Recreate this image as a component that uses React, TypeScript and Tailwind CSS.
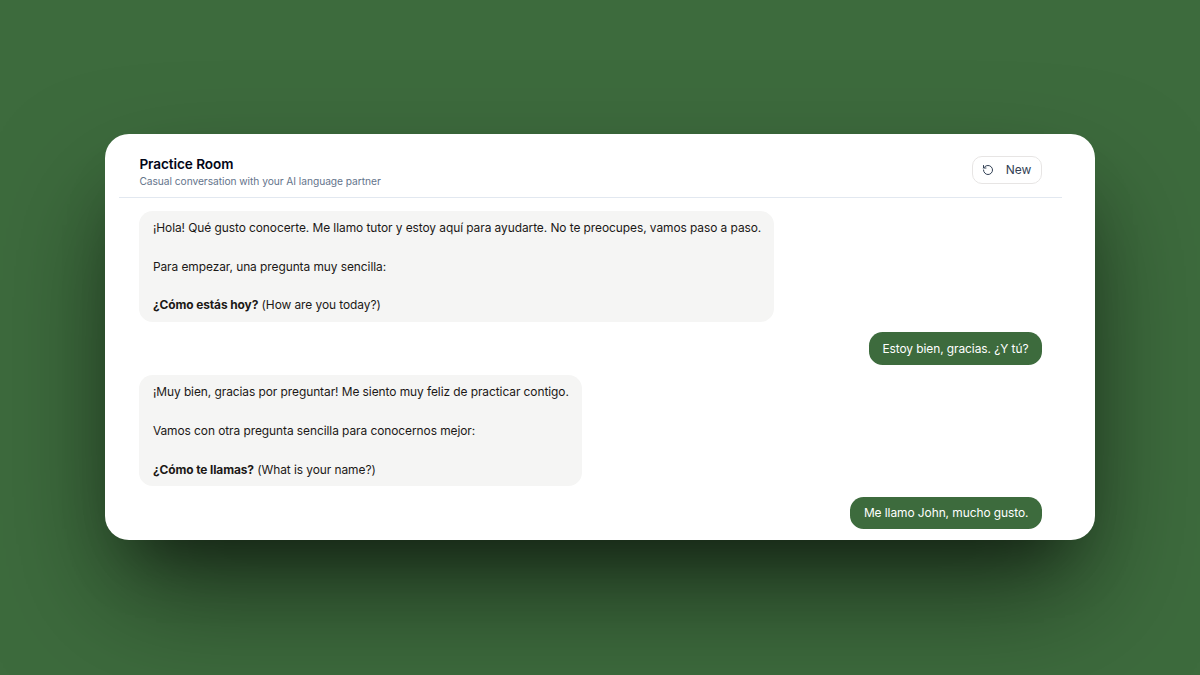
import { RotateCcw } from "lucide-react";

type Message = {
  id: number;
  from: "tutor" | "me";
  lines: string[];
  question?: string;
  translation?: string;
};

const messages: Message[] = [
  {
    id: 1,
    from: "tutor",
    lines: [
      "¡Hola! Qué gusto conocerte. Me llamo tutor y estoy aquí para ayudarte. No te preocupes, vamos paso a paso.",
      "Para empezar, una pregunta muy sencilla:",
    ],
    question: "¿Cómo estás hoy?",
    translation: "(How are you today?)",
  },
  { id: 2, from: "me", lines: ["Estoy bien, gracias. ¿Y tú?"] },
  {
    id: 3,
    from: "tutor",
    lines: [
      "¡Muy bien, gracias por preguntar! Me siento muy feliz de practicar contigo.",
      "Vamos con otra pregunta sencilla para conocernos mejor:",
    ],
    question: "¿Cómo te llamas?",
    translation: "(What is your name?)",
  },
  { id: 4, from: "me", lines: ["Me llamo John, mucho gusto."] },
];

const TutorBubble = ({ message }: { message: Message }) => {
  return (
    <div className="flex flex-col gap-[19.4px] self-start whitespace-nowrap rounded-[13.6px] bg-[#f5f5f4] pt-[6.9px] pr-[13.2px] pb-[7.1px] pl-[13.5px] text-[#1c1917]">
      {message.lines.map((line) => (
        <p key={line}>{line}</p>
      ))}
      <p>
        <strong className="font-bold tracking-[-0.1px]">{message.question}</strong> {message.translation}
      </p>
    </div>
  );
};

const MyBubble = ({ message }: { message: Message }) => {
  return (
    <div className="self-end whitespace-nowrap rounded-[13.6px] bg-[#3d6b3d] px-[13.6px] py-[6.7px] text-white">
      {message.lines[0]}
    </div>
  );
};

const App = () => {
  return (
    <div className="flex h-[675px] w-[1200px] items-start justify-center overflow-hidden bg-[#3d6b3d] pt-[133.6px] font-['Inter',sans-serif]">
      <div className="h-[406.6px] w-[990px] overflow-hidden rounded-[24px] bg-white px-[14.4px] shadow-[0_60px_120px_-10px_rgba(0,0,0,0.5),0_40px_60px_-30px_rgba(0,0,0,0.45)]">
        <header className="mr-[18.6px] flex h-16 items-start justify-between border-b border-[#e2e8f0] px-5">
          <div className="pt-[20px]">
            <h1 className="text-[13.6px] leading-5 font-semibold tracking-[-0.08px] text-[#020617]">Practice Room</h1>
            <p className="text-[10.23px] leading-[14.4px] tracking-[-0.05px] text-[#64748b]">
              Casual conversation with your AI language partner
            </p>
          </div>
          <button className="mt-[22px] flex h-7 w-[70px] items-center justify-center gap-3 rounded-[10px] border border-[#e7e5e4] pr-px text-[12px] text-[#334155]">
            <RotateCcw size={12} strokeWidth={2} />
            New
          </button>
        </header>

        <main className="mr-[18.6px] flex flex-col gap-[10.3px] px-5 pt-[13.3px] text-[11.94px] leading-[19.4px] tracking-[-0.07px]">
          {messages.map((message) =>
            message.from === "tutor" ? (
              <TutorBubble key={message.id} message={message} />
            ) : (
              <MyBubble key={message.id} message={message} />
            )
          )}
        </main>
      </div>
    </div>
  );
};

export default App;
